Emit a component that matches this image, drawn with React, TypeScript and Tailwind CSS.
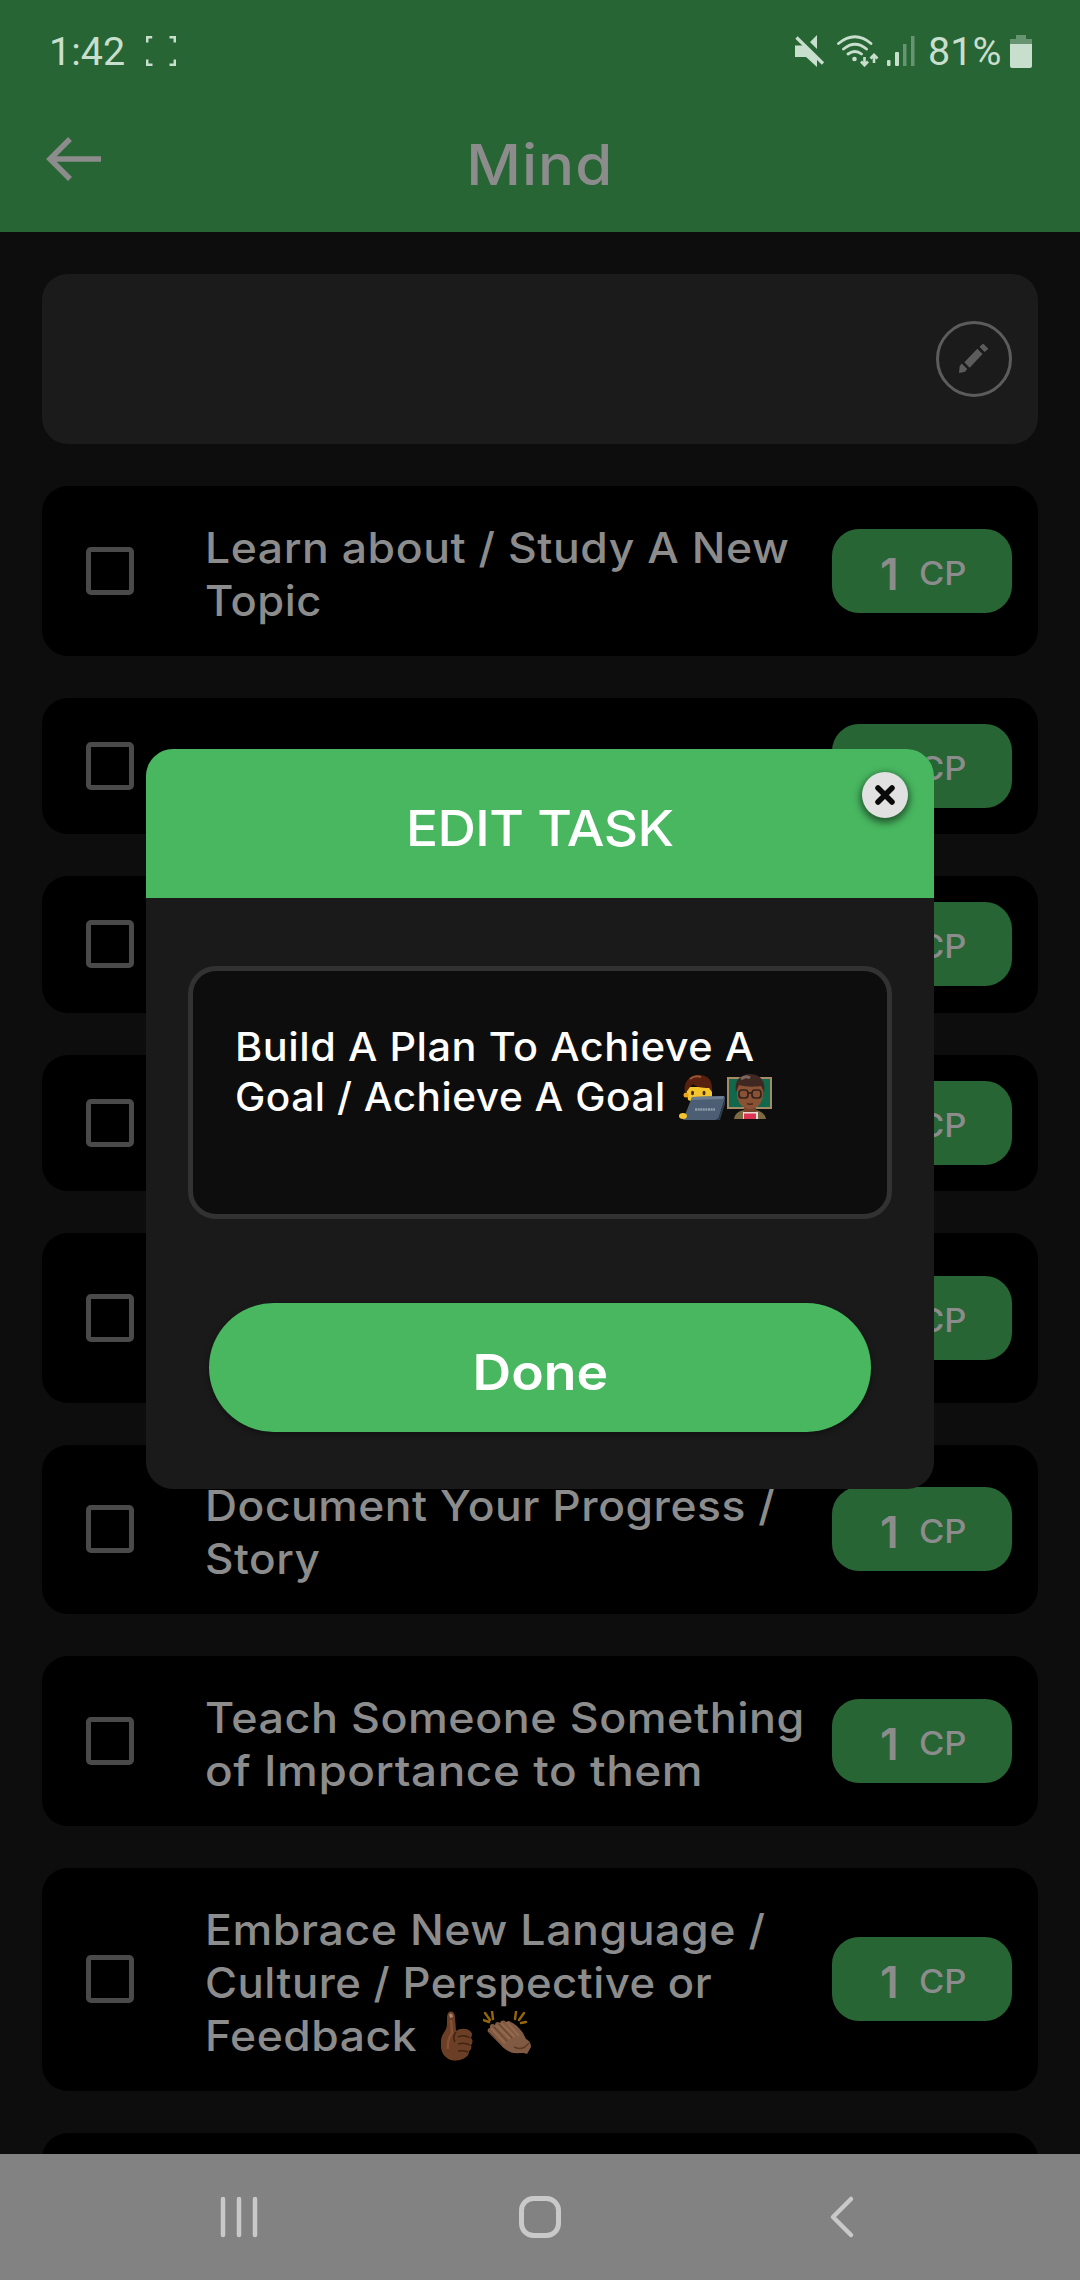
import React from "react";

type Line = { text: string; stretch: string };
type Task = { lines: Line[]; height: string; emoji?: boolean };

const TASKS: Task[] = [
  {
    height: "h-[169.5px]",
    lines: [
      { text: "Learn about / Study A New", stretch: "scale-x-[1.061]" },
      { text: "Topic", stretch: "scale-x-[1.035]" },
    ],
  },
  { height: "h-[136.5px]", lines: [] },
  { height: "h-[136.5px]", lines: [] },
  { height: "h-[136.5px]", lines: [] },
  { height: "h-[169.5px]", lines: [] },
  {
    height: "h-[169.5px]",
    lines: [
      { text: "Document Your Progress /", stretch: "scale-x-[1.057]" },
      { text: "Story", stretch: "scale-x-[1.05]" },
    ],
  },
  {
    height: "h-[169.5px]",
    lines: [
      { text: "Teach Someone Something", stretch: "scale-x-[1.067]" },
      { text: "of Importance to them", stretch: "scale-x-[1.093]" },
    ],
  },
  {
    height: "h-[223px]",
    emoji: true,
    lines: [
      { text: "Embrace New Language /", stretch: "scale-x-[1.064]" },
      { text: "Culture / Perspective or", stretch: "scale-x-[1.04]" },
      { text: "Feedback", stretch: "scale-x-[1.058]" },
    ],
  },
];

function ThumbsUp() {
  return (
    <svg width="32" height="50" viewBox="0 0 32 50" className="shrink-0">
      <path
        d="M7 2c3-3 7-1 7 4l1 14c4-3 11-3 14 0 3 2 2 5 1 7 2 2 2 5 0 7 1 3 0 5-2 6 0 3-1 5-3 6-4 4-14 5-19 1-5-3-7-10-6-17 0-5 3-8 5-12C7 13 5 6 7 2z"
        fill="#6b3f26"
      />
      <path d="M8 3c2-1.500 4 0 4 3l-3 1z" fill="#a98472" />
      <path d="M17 26q6-3 12 1M17 33q6-2 12 1M17 40q5-1 10 1M15 21q-4 5-1 10" stroke="#43230f" strokeWidth="1.500" fill="none" />
      <path d="M10 9l1 13q-5 7-4 16" stroke="#835036" strokeWidth="2.500" fill="none" />
    </svg>
  );
}

function Clap() {
  return (
    <svg width="49" height="45" viewBox="0 0 49 45" className="shrink-0">
      <path d="M2 2l5 7M9 0l1 8M0 9l6 2M32 8l1-7M36 9l5-7M38 12l5-1" stroke="#94660c" strokeWidth="2.400" strokeLinecap="round" />
      <path
        d="M7 15c0-2 3-3 5-1 0-3 3-4 5-2 1-3 4-3 6-1l3-1c5 2 10 6 14 12l3 6c4 2 5 5 5 8l-4 7c-4-2-8 0-12-1-6 0-12-5-16-10L5 21c-1-2 0-4 2-4z"
        fill="#805a42"
      />
      <path d="M8 17l14 15M13 14l14 14M18 12l14 14M24 11l12 14" stroke="#94694d" strokeWidth="2" fill="none" />
      <path d="M6 21l13 14M11 16l13 14M16 13l13 14" stroke="#5d3d28" strokeWidth="1" fill="none" />
      <path d="M31 36q6 3 11 0l4-4" stroke="#5e3b25" strokeWidth="1.500" fill="none" />
    </svg>
  );
}

function Technologist() {
  return (
    <svg width="46" height="46" viewBox="0 0 46 46" className="shrink-0">
      <path d="M7 13h26v13q-13 6-24 0z" fill="#f5c52e" />
      <circle cx="7" cy="21" r="2.500" fill="#e8a51c" />
      <path d="M6 19C4 8 10 1 20 1c9 0 14 5 13 17l-3-4c-7 0-13-1-16-4-2 2-4 4-5 6z" fill="#57200f" />
      <path d="M11 5q5-4 11-2" stroke="#9b5638" strokeWidth="2" fill="none" />
      <ellipse cx="13.500" cy="19" rx="1.500" ry="2.200" fill="#4a2a12" />
      <ellipse cx="25" cy="19" rx="1.500" ry="2.200" fill="#4a2a12" />
      <path d="M13 23l31-1c2 0 2 1 2 2l-6 19c-1 2-2 3-4 3H4z" fill="#4c5e73" />
      <path d="M13 23l32-1-1 3-32 1z" fill="#6c7e90" />
      <path d="M36 46c2 0 3-1 4-3l6-19v6l-5 16z" fill="#2f3c4b" />
      <path d="M16 35.500h20" stroke="#8d9cab" strokeWidth="2.500" strokeDasharray="2 .6" />
      <ellipse cx="4" cy="42" rx="4" ry="3" fill="#f3c332" />
    </svg>
  );
}

function Teacher() {
  return (
    <svg width="45" height="45" viewBox="0 0 45 45" className="shrink-0">
      <rect x="1" y="4" width="43" height="30" fill="#11684a" stroke="#a58a67" strokeWidth="2" />
      <path d="M7 45c1-6 5-8 10-9h12c5 1 9 4 10 9z" fill="#7b6a42" />
      <path d="M17 30h12v8H17z" fill="#74432a" />
      <path d="M10 14c0-8 5-12 13-12s13 4 13 12v6c0 9-6 15-13 15s-13-6-13-15z" fill="#8a5235" />
      <path d="M9 18C7 7 13 0 23 0s16 7 14 18l-3-6c-6 1-16 1-22-1z" fill="#3f2822" />
      <path d="M14 5q5-4 9-1" stroke="#7b6660" strokeWidth="3" fill="none" />
      <rect x="12" y="16" width="9" height="8" rx="3" fill="none" stroke="#33221b" strokeWidth="1.700" />
      <rect x="25" y="16" width="9" height="8" rx="3" fill="none" stroke="#33221b" strokeWidth="1.700" />
      <path d="M21 19h4" stroke="#33221b" strokeWidth="1.700" />
      <path d="M20 29.500q3 1.500 6 0" stroke="#542b1c" strokeWidth="1.500" fill="none" />
      <path d="M16 38h15v7H16z" fill="#e9dbd3" />
      <path d="M17 39.500h12V45H17z" fill="#dc3554" />
    </svg>
  );
}

function StatusBar() {
  return (
    <div className="flex h-[102px] items-center justify-between pl-[49px] pr-[48px] text-[#c9dfcd]">
      <div className="flex items-center">
        <span className="w-[97px] pt-px font-[Roboto] text-[39.5px] leading-none">1:42</span>
        <svg width="30" height="30" viewBox="0 0 30 30" fill="none" stroke="currentColor" strokeWidth="2.500">
          <path d="M1.200 6.500V1.200h5M23.500 1.200h5.300v5.300M28.800 23.500v5.300h-5.300M6.500 28.800H1.200v-5.300" />
        </svg>
      </div>
      <div className="flex items-center">
        <svg width="30" height="32" viewBox="0 0 30 32" fill="currentColor">
          <path d="M0 10.500h9L22 23v9L11 22H0zM22 0v14l-7-7z" />
          <path d="M1.500 2.500l26.500 26" stroke="currentColor" strokeWidth="3.200" />
        </svg>
        <svg width="42" height="32" viewBox="0 0 42 32" className="ml-3" fill="none" stroke="currentColor" strokeWidth="2.800" strokeLinecap="round">
          <path d="M1.500 8.500Q18 -5 34 8.500M6.500 14Q18 4.500 29.500 14M11 19Q18 14 24.500 19" />
          <circle cx="17.500" cy="24" r="2.300" fill="currentColor" stroke="none" />
          <path d="M27.500 22v8m-3.500-3.500l3.500 3.700 3.500-3.700M37 28v-8m-3.500 3.500l3.500-3.700 3.500 3.700" strokeWidth="2.600" strokeLinecap="butt" />
        </svg>
        <svg width="28" height="32" viewBox="0 0 28 32" className="ml-2" fill="currentColor">
          <rect x="0" y="25" width="3.500" height="6" rx="1" />
          <rect x="8" y="17" width="4" height="14" rx="1" />
          <rect x="16" y="9" width="3.500" height="22" opacity=".4" />
          <rect x="24" y="1" width="3.500" height="30" opacity=".4" />
        </svg>
        <span className="ml-[13px] w-[82px] pt-px font-[Roboto] text-[39.5px] leading-none">81%</span>
        <svg width="22" height="33" viewBox="0 0 22 33" fill="currentColor">
          <path d="M6 0h10v4h6v6H0V4h6z" opacity=".4" />
          <path d="M0 9h22v22q0 2-2 2H2q-2 0-2-2z" />
        </svg>
      </div>
    </div>
  );
}

function Header() {
  return (
    <header className="h-[232px] shrink-0 bg-[#286534]">
      <StatusBar />
      <div className="grid h-[120px] grid-cols-[1fr_auto_1fr] items-center px-[46px] text-[#8c8c8c]">
        <svg width="56" height="44" viewBox="0 0 56 44" fill="none" stroke="currentColor" strokeWidth="5.500" className="-mt-[7px]">
          <path d="M55 22H4M24 2L4 22l20 20" />
        </svg>
        <h1 className="scale-x-[1.07] pt-[5px] text-[56px] font-medium leading-none tracking-[1px]">Mind</h1>
      </div>
    </header>
  );
}

function TaskCard({ task }: { task: Task }) {
  return (
    <div className={`flex shrink-0 items-center rounded-[26px] bg-black pl-[44px] pr-[26px] ${task.height}`}>
      <div className="size-12 rounded-[5px] border-[5px] border-[#4a4a4a]" />
      <div className="ml-[71px] flex-1 whitespace-nowrap pt-[6px] text-[42px] font-medium leading-[53px] text-[#8c8c8c]">
        {task.lines.map((line, i) => (
          <div key={line.text} className="flex h-[53px]">
            <span className={`inline-block origin-left tracking-[0.5px] ${line.stretch}`}>{line.text}</span>
            {task.emoji && i === 2 && (
              <span className="ml-[35px] flex items-start gap-[10px] pt-[2px]">
                <ThumbsUp />
                <Clap />
              </span>
            )}
          </div>
        ))}
      </div>
      <div className="flex h-[84px] w-[180px] items-baseline rounded-[27px] bg-[#286534] pl-[48px] pt-[15px] text-[#8c8c8c]">
        <span className="w-[39px] text-[44px] font-semibold leading-[60px]">1</span>
        <span className="relative -top-[5px] origin-left scale-x-[1.08] text-[32px] font-medium">CP</span>
      </div>
    </div>
  );
}

function EditDialog() {
  return (
    <div className="absolute left-[146px] top-[749px] flex h-[740px] w-[788px] flex-col overflow-hidden rounded-[27px] bg-[#1a1a1a] text-white">
      <div className="relative flex h-[149px] shrink-0 items-center justify-center bg-[#48b760]">
        <h2 className="scale-x-[1.064] pt-2 text-[50px] font-medium leading-none tracking-[-0.5px]">EDIT TASK</h2>
        <button className="absolute right-[26px] top-[23px] flex size-[46px] items-center justify-center rounded-full bg-[#e1e1e1] shadow-[0_3px_7px_2px_rgba(0,0,0,0.5)]">
          <svg width="22" height="22" viewBox="0 0 22 22" stroke="#0a0a0a" strokeWidth="5.500" strokeLinecap="round">
            <path d="M4 4l14 14M18 4L4 18" />
          </svg>
        </button>
      </div>
      <div className="mx-[42px] mt-[68px] h-[253px] shrink-0 whitespace-nowrap rounded-[28px] border-[5px] border-[#323232] bg-[#0d0d0d] pl-[42px] pt-[51px] text-[39px] font-medium leading-[50px]">
        <div className="origin-left scale-x-[1.063] tracking-[0.5px]">Build A Plan To Achieve A</div>
        <div className="flex items-center">
          <span className="w-[444px] origin-left scale-x-[1.04] tracking-[0.5px]">Goal / Achieve A Goal</span>
          <span className="flex gap-[2px]">
            <Technologist />
            <Teacher />
          </span>
        </div>
      </div>
      <button className="mx-[63px] mt-[84px] flex h-[129px] shrink-0 items-center justify-center rounded-full bg-[#48b760] pt-[8px] text-[50px] font-semibold leading-none shadow-[0_2px_6px_rgba(0,0,0,0.4)]">
        <span className="scale-x-[1.07]">Done</span>
      </button>
    </div>
  );
}

function NavBar() {
  return (
    <nav className="flex h-[126px] shrink-0 items-center justify-between bg-[#828282] pl-[219px] pr-[225px]">
      <svg width="40" height="44" viewBox="0 0 40 44" stroke="#c9c9c9" strokeWidth="4.500" strokeLinecap="round">
        <path d="M4 4v36M20 4v36M36 4v36" />
      </svg>
      <svg width="44" height="44" viewBox="0 0 44 44" fill="none" stroke="#c9c9c9" strokeWidth="5" className="-ml-[8px]">
        <rect x="3.500" y="3.500" width="37" height="37" rx="12" />
      </svg>
      <svg width="26" height="44" viewBox="0 0 26 44" fill="none" stroke="#c9c9c9" strokeWidth="4.500" strokeLinecap="round" strokeLinejoin="round">
        <path d="M22 4L4 22l18 18" />
      </svg>
    </nav>
  );
}

export default function App() {
  return (
    <div className="relative flex h-[2280px] w-[1080px] flex-col overflow-hidden bg-[#0d0d0d] font-['Inter',sans-serif]">
      <Header />
      <main className="flex min-h-0 flex-1 flex-col gap-[42px] overflow-hidden px-[42px] pt-[42px]">
        <div className="flex h-[170px] shrink-0 items-center justify-end rounded-[26px] bg-[#1b1b1b] pr-[26px]">
          <div className="flex size-[76px] items-center justify-center rounded-full border-[3px] border-[#5c5c5c]">
            <svg width="30" height="30" viewBox="0 0 30 30" fill="#5c5c5c">
              <path d="M0 29l.7-7 2-2.500 5.500 5.500-2.200 2.800zM5.300 18.300l13-13.600 5.300 5.300-13 13.700zM20.500 2.700L23.300.200q.8-.5 1.500 0l3.900 3.700q.6 1 0 1.700L25.500 8z" />
            </svg>
          </div>
        </div>
        {TASKS.map((task, i) => (
          <TaskCard key={i} task={task} />
        ))}
        <div className="h-[169.5px] shrink-0 rounded-[26px] bg-black" />
      </main>
      <NavBar />
      <EditDialog />
    </div>
  );
}
